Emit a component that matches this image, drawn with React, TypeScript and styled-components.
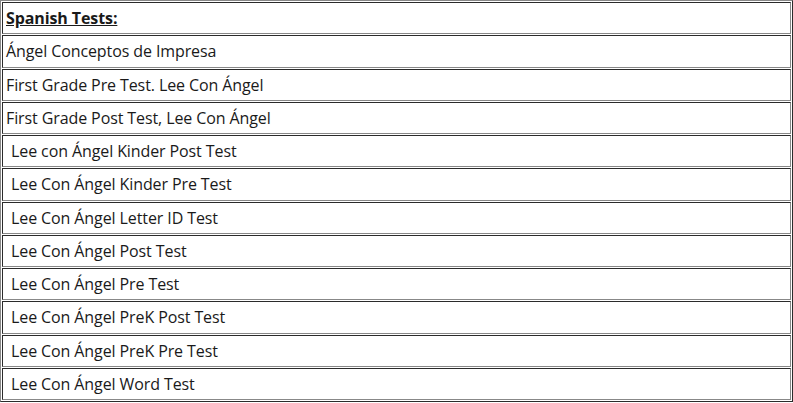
import React from "react";
import styled, { createGlobalStyle } from "styled-components";

const Global = createGlobalStyle`
  html, body { margin: 0; padding: 0; background: #ffffff; }
  body { font-family: "Open Sans", "Noto Sans", sans-serif; color: #1a1a1a; }
`;

const Table = styled.table`
  width: 793px;
  border-collapse: separate;
  border-spacing: 1px;
  border: 1px solid;
  border-color: #888888 #2b2b2b #2b2b2b #888888;
`;

const Cell = styled.td<{ $indent?: boolean }>`
  height: 32.25px;
  box-sizing: border-box;
  padding: 0 0 0 ${(p) => (p.$indent ? "8px" : "3px")};
  border: 1px solid;
  border-color: #2b2b2b #888888 #888888 #2b2b2b;
  font-size: 16px;
  line-height: 20px;
  letter-spacing: -0.1px;
  vertical-align: middle;
  white-space: nowrap;
`;

const Heading = styled.span`
  font-weight: 700;
  text-decoration: underline;
`;

const rows: { text: string; indent: boolean }[] = [
  { text: "Ángel Conceptos de Impresa", indent: false },
  { text: "First Grade Pre Test. Lee Con Ángel", indent: false },
  { text: "First Grade Post Test, Lee Con Ángel", indent: false },
  { text: "Lee con Ángel Kinder Post Test", indent: true },
  { text: "Lee Con Ángel Kinder Pre Test", indent: true },
  { text: "Lee Con Ángel Letter ID Test", indent: true },
  { text: "Lee Con Ángel Post Test", indent: true },
  { text: "Lee Con Ángel Pre Test", indent: true },
  { text: "Lee Con Ángel PreK Post Test", indent: true },
  { text: "Lee Con Ángel PreK Pre Test", indent: true },
  { text: "Lee Con Ángel Word Test", indent: true },
];

export default function App() {
  return (
    <>
      <Global />
      <Table>
        <tbody>
          <tr>
            <Cell>
              <Heading>Spanish Tests:</Heading>
            </Cell>
          </tr>
          {rows.map((r) => (
            <tr key={r.text}>
              <Cell $indent={r.indent}>{r.text}</Cell>
            </tr>
          ))}
        </tbody>
      </Table>
    </>
  );
}
